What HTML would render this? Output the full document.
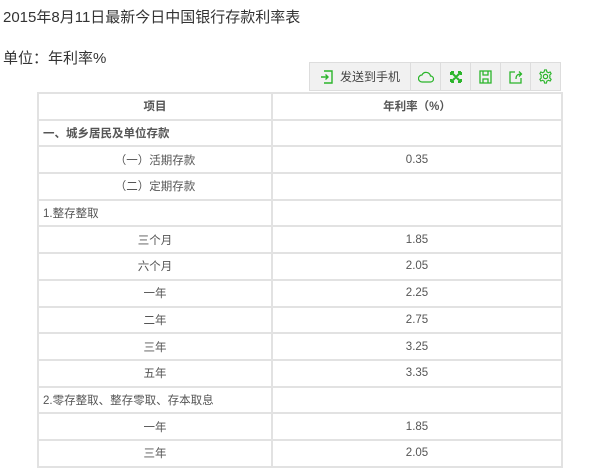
<!DOCTYPE html>
<html><head><meta charset="utf-8"><style>
body{margin:0;width:600px;height:442px;background:#fff;font-family:"Liberation Sans","Noto Sans CJK SC",sans-serif;overflow:hidden;position:relative}
.t{position:absolute;left:3px;top:6px;font-size:15px;color:#333}
.u{position:absolute;left:3px;top:47px;font-size:15px;color:#333}
.tb{position:absolute;left:309px;top:62px;height:27px;border:1px solid #ddd;background:#f1f1f1;display:flex}
.tb div{height:27px;border-left:1px solid #ddd;display:flex;align-items:center;justify-content:center;width:29px;color:#2bb52b}
.tb div:first-child{border-left:none;width:100px;color:#444;font-size:12px}
table{position:absolute;left:37px;top:92px;border-collapse:collapse;width:526px;table-layout:fixed}
td{border:2px solid #e2e2e2;height:24.7px;padding:0 4px;font-size:11.5px;color:#555;text-align:center}
td.l{text-align:left}
.b{font-weight:bold}
</style></head><body>
<div class="t">2015年8月11日最新今日中国银行存款利率表</div>
<div class="u">单位：年利率%</div>
<div class="tb">
<div><svg width="14" height="16" viewBox="0 0 14 16" style="margin-right:6px"><path d="M4 2H12V14H4M1 8H8M5.5 5.5L8 8L5.5 10.5" fill="none" stroke="#2bb52b" stroke-width="1.4"/></svg>发送到手机</div>
<div><svg width="16" height="12" viewBox="0 0 16 12"><path d="M4 11H12.5A3 3 0 0 0 12.5 5A4.5 4.5 0 0 0 4 4A3.5 3.5 0 0 0 4 11Z" fill="none" stroke="#2bb52b" stroke-width="1.2"/></svg></div>
<div><svg width="12" height="12" viewBox="0 0 12 12"><path d="M1 1L11 11M11 1L1 11M1 1H4M1 1V4M11 1H8M11 1V4M1 11H4M1 11V8M11 11H8M11 11V8" fill="none" stroke="#2bb52b" stroke-width="2"/></svg></div>
<div><svg width="13" height="14" viewBox="0 0 13 14"><path d="M1 1H12V13H1ZM4 1V5H9V1M4 13V9H9V13" fill="none" stroke="#2bb52b" stroke-width="1.3"/></svg></div>
<div><svg width="14" height="14" viewBox="0 0 14 14"><path d="M6 2H1V13H12V8M7 9C7 5 9 4 12 4M10 1.5L12.5 4L10 6.5" fill="none" stroke="#2bb52b" stroke-width="1.3"/></svg></div>
<div><svg width="15" height="15" viewBox="0 0 16 16"><circle cx="8" cy="8" r="2.3" fill="none" stroke="#2bb52b" stroke-width="1.3"/><path d="M7 1H9L9.4 3A5 5 0 0 1 11 4L13 3.2L14 5L12.5 6.5A5 5 0 0 1 12.5 9.5L14 11L13 12.8L11 12A5 5 0 0 1 9.4 13L9 15H7L6.6 13A5 5 0 0 1 5 12L3 12.8L2 11L3.5 9.5A5 5 0 0 1 3.5 6.5L2 5L3 3.2L5 4A5 5 0 0 1 6.6 3Z" fill="none" stroke="#2bb52b" stroke-width="1.2"/></svg></div>
</div>
<table>
<tr><td class="b" style="width:224px">项目</td><td class="b">年利率（%）</td></tr>
<tr><td class="l b">一、城乡居民及单位存款</td><td></td></tr>
<tr><td>（一）活期存款</td><td>0.35</td></tr>
<tr><td>（二）定期存款</td><td></td></tr>
<tr><td class="l">1.整存整取</td><td></td></tr>
<tr><td>三个月</td><td>1.85</td></tr>
<tr><td>六个月</td><td>2.05</td></tr>
<tr><td>一年</td><td>2.25</td></tr>
<tr><td>二年</td><td>2.75</td></tr>
<tr><td>三年</td><td>3.25</td></tr>
<tr><td>五年</td><td>3.35</td></tr>
<tr><td class="l">2.零存整取、整存零取、存本取息</td><td></td></tr>
<tr><td>一年</td><td>1.85</td></tr>
<tr><td>三年</td><td>2.05</td></tr>
</table>
</body></html>
